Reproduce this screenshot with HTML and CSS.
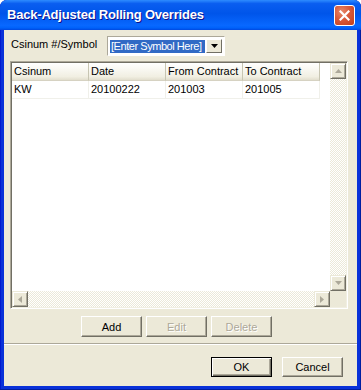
FILE: index.html
```html
<!DOCTYPE html>
<html lang="en">
<head>
  <meta charset="UTF-8">
  <title>Back-Adjusted Rolling Overrides</title>
  <link rel="stylesheet" href="styles.css">
</head>
<body>
  <div class="window">
    <div class="titlebar">
      <span class="title">Back-Adjusted Rolling Overrides</span>
      <button class="close" aria-label="Close">
        <svg width="11" height="11" viewBox="0 0 11 11">
          <path d="M1.5 1.5 L9.5 9.5 M9.5 1.5 L1.5 9.5" stroke="#fff" stroke-width="2.2" stroke-linecap="square"/>
        </svg>
      </button>
    </div>

    <div class="client">
      <div class="symbol-row">
        <label class="symbol-label">Csinum #/Symbol</label>
        <div class="combo">
          <span class="combo-text">[Enter Symbol Here]</span>
          <span class="combo-btn">
            <svg width="7" height="4" viewBox="0 0 7 4"><path d="M0 0 H7 L3.5 4 Z" fill="#000"/></svg>
          </span>
        </div>
      </div>

      <div class="listview">
        <div class="lv-main">
          <div class="lv-body">
            <div class="lv-row lv-header">
              <div class="cell">Csinum</div>
              <div class="cell">Date</div>
              <div class="cell">From Contract</div>
              <div class="cell">To Contract</div>
            </div>
            <div class="lv-row">
              <div class="cell">KW</div>
              <div class="cell">20100222</div>
              <div class="cell">201003</div>
              <div class="cell">201005</div>
            </div>
          </div>
          <div class="vscroll">
            <div class="sb-btn">
              <svg width="7" height="4" viewBox="0 0 7 4"><path d="M3.5 0 L7 4 H0 Z" fill="#ACA899"/></svg>
            </div>
            <div class="sb-track"></div>
            <div class="sb-btn">
              <svg width="7" height="4" viewBox="0 0 7 4"><path d="M0 0 H7 L3.5 4 Z" fill="#ACA899"/></svg>
            </div>
          </div>
        </div>
        <div class="hscroll-row">
          <div class="hscroll">
            <div class="sb-btn">
              <svg width="4" height="7" viewBox="0 0 4 7"><path d="M4 0 V7 L0 3.5 Z" fill="#ACA899"/></svg>
            </div>
            <div class="sb-track"></div>
            <div class="sb-btn">
              <svg width="4" height="7" viewBox="0 0 4 7"><path d="M0 0 V7 L4 3.5 Z" fill="#ACA899"/></svg>
            </div>
          </div>
          <div class="sb-corner"></div>
        </div>
      </div>

      <div class="actions">
        <button class="btn">Add</button>
        <button class="btn" disabled>Edit</button>
        <button class="btn" disabled>Delete</button>
      </div>

      <div class="separator"></div>

      <div class="footer">
        <button class="btn default">OK</button>
        <button class="btn">Cancel</button>
      </div>
    </div>
  </div>
</body>
</html>
```

FILE: styles.css
```css
* {
  box-sizing: border-box;
}
body {
  margin: 0;
  font-family: 'Liberation Sans', Arial, sans-serif;
  font-size: 11px;
  color: #000;
  background: #fff;
}
.window {
  width: 361px;
  height: 390px;
  display: flex;
  flex-direction: column;
  background: #0831D9;
  border-radius: 7px 7px 0 0;
  padding: 0 4px 4px 4px;
  box-shadow: inset 0 -1px 0 #001EA0, inset 1px 0 0 #0019CF, inset -1px 0 0 #001EA0;
}
.titlebar {
  height: 30px;
  margin: 0 -4px;
  padding: 0 6px 0 7px;
  display: flex;
  align-items: center;
  justify-content: space-between;
  border-radius: 7px 7px 0 0;
  background: linear-gradient(#2E8CFF 0%, #0A5EF0 12%, #0055EA 45%, #0868FF 85%, #0062FA 93%, #0048E0 100%);
}
.title {
  color: #fff;
  font-weight: bold;
  font-size: 13px;
  letter-spacing: -0.2px;
  text-shadow: 1px 1px 0 #0F1089;
  margin-top: -1px;
}
.close {
  width: 21px;
  height: 21px;
  padding: 0;
  border: 1px solid #fff;
  border-radius: 3px;
  background: radial-gradient(circle at 35% 30%, #E8896A 0%, #D8593A 45%, #C23E1A 100%);
  display: flex;
  align-items: center;
  justify-content: center;
  margin-top: 1px;
}
.client {
  flex: 1;
  background: #ECE9D8;
  display: flex;
  flex-direction: column;
}
.symbol-row {
  display: flex;
  align-items: flex-start;
  padding: 6px 0 0 7px;
  height: 31px;
}
.symbol-label {
  margin-top: 2px;
  width: 96px;
}
.combo {
  width: 118px;
  height: 20px;
  background: #fff;
  border: 1px solid #fff;
  border-top-color: #ACA899;
  border-left-color: #ACA899;
  display: flex;
  align-items: center;
  padding: 0 2px 0 2px;
}
.combo-text {
  background: #316AC5;
  color: #fff;
  height: 13px;
  line-height: 13px;
  padding: 0 1px;
  width: 96px;
  letter-spacing: -0.45px;
  white-space: nowrap;
}
.combo-btn {
  width: 16px;
  height: 14px;
  background: #ECE9D8;
  border: 1px solid;
  border-color: #fff #716F64 #716F64 #fff;
  display: flex;
  align-items: center;
  justify-content: center;
  margin-left: 1px;
}
.listview {
  margin-left: 6px;
  width: 338px;
  height: 248px;
  background: #fff;
  border: 1px solid;
  border-color: #ACA899 #fff #fff #ACA899;
  box-shadow: inset 1px 1px 0 #716F64, inset -1px -1px 0 #F1EFE2;
  padding: 1px;
  display: flex;
  flex-direction: column;
}
.lv-main {
  flex: 1;
  display: flex;
  min-height: 0;
}
.lv-body {
  flex: 1;
  background: #fff;
}
.lv-row {
  display: flex;
  height: 18px;
}
.cell {
  width: 77px;
  padding: 2px 0 0 2px;
  border-right: 1px solid #F0F0EA;
  border-bottom: 1px solid #F0F0EA;
  white-space: nowrap;
  overflow: hidden;
}
.lv-header .cell {
  background: linear-gradient(#FFFFFF, #F1EFE2 80%, #E2DECD);
  border-right: 1px solid #C7C5B2;
  border-bottom: 1px solid #D6D2C2;
  padding-top: 2px;
}
.vscroll {
  width: 16px;
  display: flex;
  flex-direction: column;
}
.hscroll-row {
  height: 16px;
  display: flex;
}
.hscroll {
  flex: 1;
  display: flex;
}
.sb-corner {
  width: 16px;
  background: #ECE9D8;
}
.sb-btn {
  width: 16px;
  height: 16px;
  flex: none;
  background: #ECE9D8;
  border: 1px solid;
  border-color: #ECE9D8 #716F64 #716F64 #ECE9D8;
  box-shadow: inset 1px 1px 0 #fff, inset -1px -1px 0 #ACA899;
  display: flex;
  align-items: center;
  justify-content: center;
}
.sb-track {
  flex: 1;
  background: repeating-conic-gradient(#fff 0 25%, #ECE9D8 0 50%) 0 0 / 2px 2px;
}
.actions {
  display: flex;
  gap: 4px;
  margin: 7px 0 0 77px;
}
.btn {
  width: 61px;
  height: 21px;
  padding: 0;
  font: inherit;
  color: #000;
  background: #ECE9D8;
  border: 1px solid;
  border-color: #fff #716F64 #716F64 #fff;
  box-shadow: inset -1px -1px 0 #ACA899;
}
.btn:disabled {
  color: #ACA899;
  text-shadow: 1px 1px 0 #fff;
}
.separator {
  margin-top: 6px;
  height: 2px;
  border-top: 1px solid #ACA899;
  border-bottom: 1px solid #fff;
}
.footer {
  display: flex;
  gap: 10px;
  margin: 12px 0 0 207px;
}
.footer .btn {
  height: 20px;
}
.btn.default {
  border: 1px solid #000;
  box-shadow: inset 1px 1px 0 #fff, inset -1px -1px 0 #716F64, inset -2px -2px 0 #ACA899;
}
```
